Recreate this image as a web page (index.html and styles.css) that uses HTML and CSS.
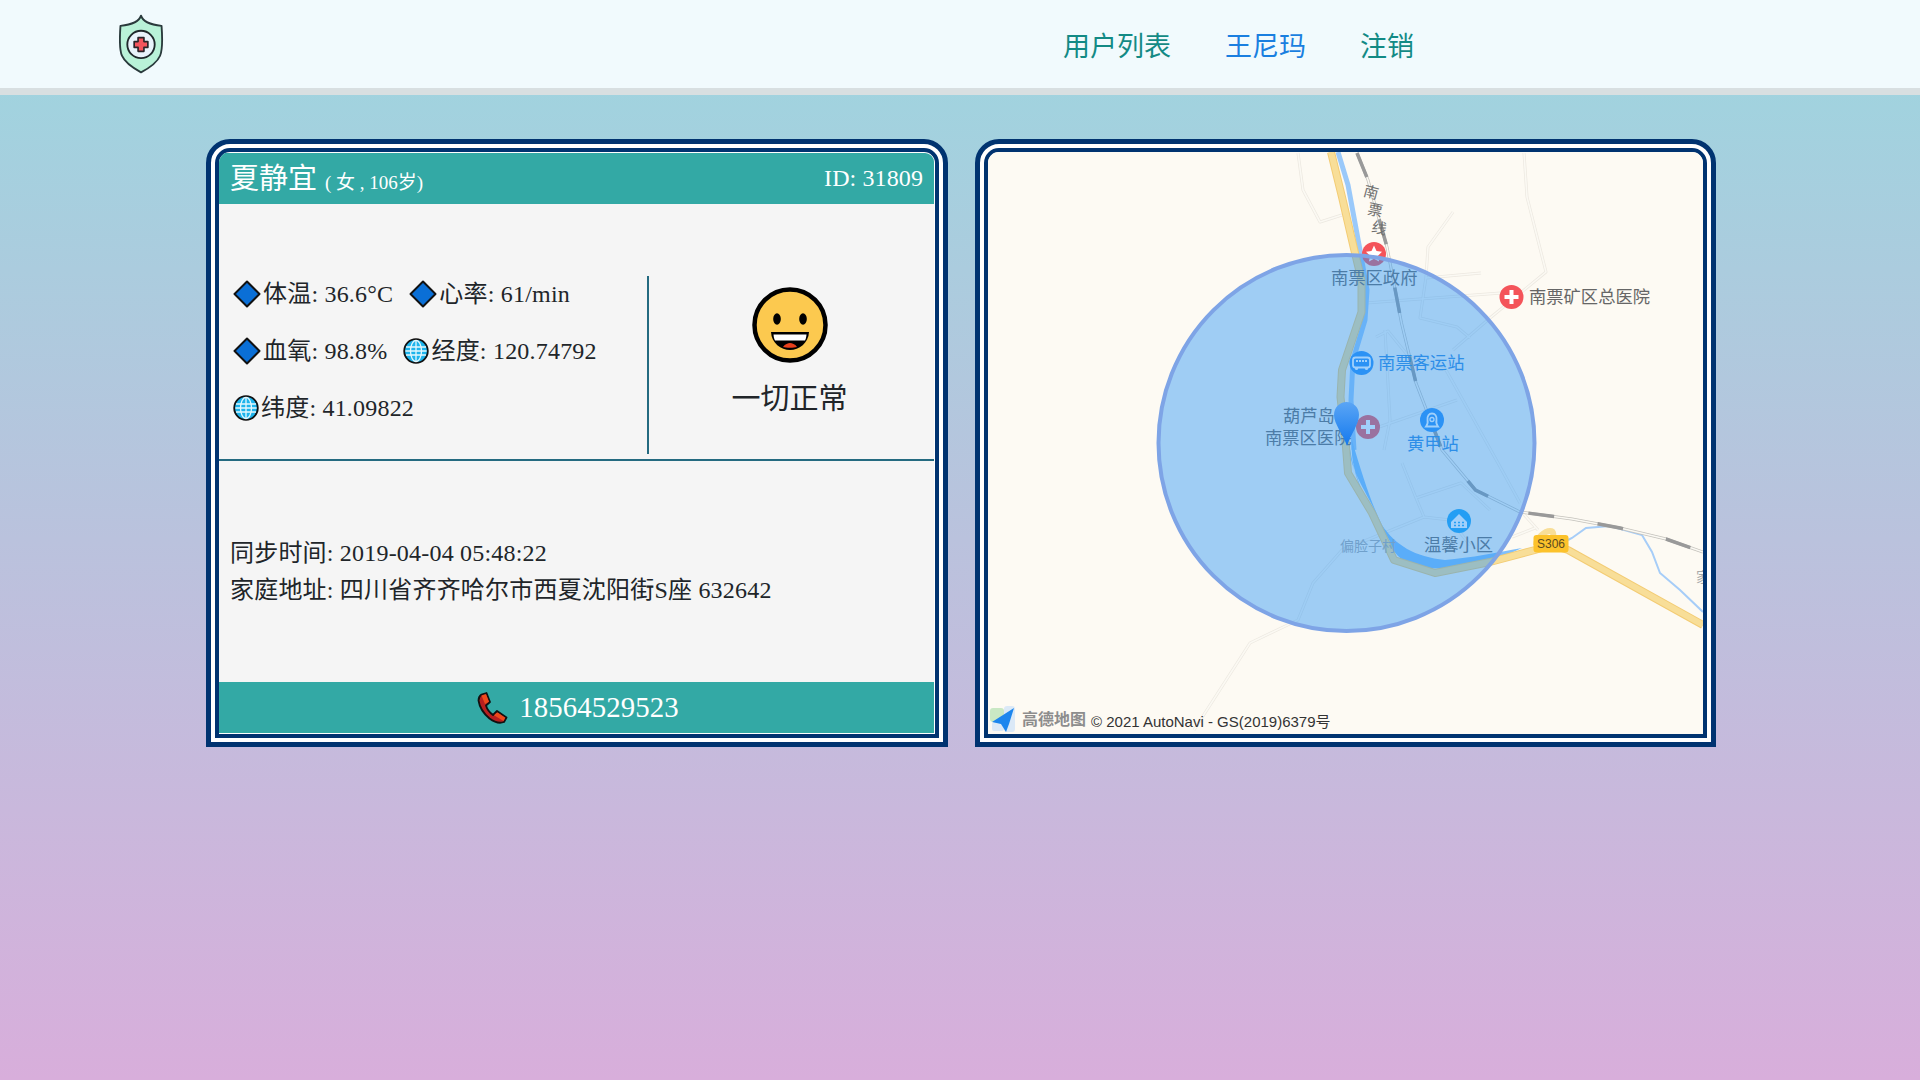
FILE: index.html
```html
<!DOCTYPE html>
<html lang="zh-CN">
<head>
<meta charset="utf-8">
<title>用户详情</title>
<link rel="stylesheet" href="styles.css">
</head>
<body>
<svg class="defs" width="0" height="0" aria-hidden="true">
  <defs>
    <symbol id="diamond" viewBox="0 0 28 28"><polygon points="14,1.500 26.500,14 14,26.500 1.500,14" fill="#0a6fd6" stroke="#111" stroke-width="2" stroke-linejoin="round"/></symbol>
    <symbol id="globe" viewBox="0 0 26 26">
      <circle cx="13" cy="13" r="11.800" fill="#1db4ec" stroke="#111" stroke-width="1.800"/>
      <g fill="none" stroke="#e4f7fd" stroke-width="1.300">
        <ellipse cx="13" cy="13" rx="5.500" ry="10.600"/>
        <path d="M13 2.400V23.600M3 9H23M2.400 13H23.600M3 17H23"/>
      </g>
    </symbol>
  </defs>
</svg>
<nav class="nav">
  <svg class="logo" viewBox="0 0 46 60" aria-label="logo">
    <path d="M22.500 1 C24 6 30 10 43.500 11.500 C44.500 25 44.500 36 42 42 C38.500 50 30 55 22.500 59 C15 55 6.500 50 3 42 C.5 36 .5 25 1.500 11.500 C15 10 21 6 22.500 1 Z" fill="#b9f2d8" stroke="#2a3a3c" stroke-width="1.900" stroke-linejoin="round"/>
    <circle cx="22.500" cy="30.500" r="14" fill="#e9f3fb" stroke="#20292c" stroke-width="1.900"/>
    <path d="M19.500 23.500H25.500V27.500H29.500V33.500H25.500V37.500H19.500V33.500H15.500V27.500H19.500Z" fill="#f3545d" stroke="#2a2328" stroke-width="1.700" stroke-linejoin="round"/>
  </svg>
  <div class="nav-links">
    <a class="nav-link">用户列表</a>
    <a class="nav-link nav-link-user">王尼玛</a>
    <a class="nav-link">注销</a>
  </div>
</nav>
<main class="main">
  <section class="card">
    <div class="card-inner card-inner-info">
      <header class="card-head">
        <div class="head-left"><span class="name">夏静宜</span><span class="sub">( 女 , 106岁)</span></div>
        <div class="uid">ID: 31809</div>
      </header>
      <div class="top">
        <div class="metrics">
          <div class="metric-row">
            <span class="metric"><svg class="ico"><use href="#diamond"/></svg><span class="metric-text">体温: 36.6°C</span></span>
            <span class="metric"><svg class="ico"><use href="#diamond"/></svg><span class="metric-text">心率: 61/min</span></span>
          </div>
          <div class="metric-row">
            <span class="metric"><svg class="ico"><use href="#diamond"/></svg><span class="metric-text">血氧: 98.8%</span></span>
            <span class="metric"><svg class="ico ico-globe"><use href="#globe"/></svg><span class="metric-text">经度: 120.74792</span></span>
          </div>
          <div class="metric-row">
            <span class="metric"><svg class="ico ico-globe"><use href="#globe"/></svg><span class="metric-text">纬度: 41.09822</span></span>
          </div>
        </div>
        <div class="divider"></div>
        <div class="status">
          <svg class="emoji" viewBox="0 0 76 76">
            <circle cx="38" cy="38" r="35.500" fill="#fcc94f" stroke="#000" stroke-width="4.500"/>
            <ellipse cx="25" cy="32" rx="3.800" ry="5.800" fill="#000"/>
            <ellipse cx="51" cy="32" rx="3.800" ry="5.800" fill="#000"/>
            <path d="M19 45H57C56.500 56 47 63 38 63S19.500 56 19 45Z" fill="#000"/>
            <path d="M21.500 47.500H54.500C54.300 50 53.800 52 53 53.500H23C22.200 52 21.700 50 21.500 47.500Z" fill="#fff"/>
            <path d="M31 60C33 57 36 56 38 56S43 57 45 60C42 61 34 61 31 60Z" fill="#e8401c"/>
          </svg>
          <div class="status-text">一切正常</div>
        </div>
      </div>
      <div class="rule"></div>
      <div class="info">
        <div>同步时间: 2019-04-04 05:48:22</div>
        <div>家庭地址: 四川省齐齐哈尔市西夏沈阳街S座 632642</div>
      </div>
      <footer class="card-foot">
        <svg class="phone" viewBox="0 0 32 32">
          <path d="M5.500 2.500 L10.500 1 L14 10 L10 13.500 Q11.500 19 17 23 L21 19 L30.500 25.500 L28 30 Q21.500 32.500 13.500 26.500 Q4 18.500 2.500 8.500 Q2.500 4.500 5.500 2.500Z" fill="#b81f1f" stroke="#111" stroke-width="1.800" stroke-linejoin="round"/>
          <path d="M5.500 3.500 L10 2.200 L13 9.800 L9 12 Z M21.200 20.200 L29.300 25.700 L27.500 29 L18 23.200 Z" fill="#ee4a1c"/>
        </svg>
        <span class="phone-num">18564529523</span>
      </footer>
    </div>
  </section>
  <section class="card card-map">
    <div class="card-inner">
      <svg class="map" viewBox="988 152 715 582" role="img" aria-label="地图">
        <defs>
          <linearGradient id="pin" x1="0" y1="0" x2="0" y2="1"><stop offset="0" stop-color="#5aa5f5"/><stop offset="1" stop-color="#1479ee"/></linearGradient>
        </defs>
        <rect x="988" y="152" width="715" height="582" fill="#fdfaf3"/>
        <g class="minor">
          <path d="M1298 153L1303 190L1320 222L1342 215M1524 153L1527 197L1546 272L1490 318L1453 350M1453 212L1428 247L1426 277L1420 318L1457 327L1470 338M1366 303L1501 293M1426 278L1481 273M1376 337L1388 331L1409 357L1446 370L1498 463L1520 503M1379 427L1457 400M1385 330L1390 420L1384 450M1402 463L1416 498L1424 517L1342 550L1313 583L1298 620L1250 643L1194 730M1416 498L1461 483L1490 510M1424 517L1450 520L1470 545M1520 510L1538 530M1512 537L1535 528"/>
        </g>
        <g class="minor-in">
          <path d="M1298 153L1303 190L1320 222L1342 215M1524 153L1527 197L1546 272L1490 318L1453 350M1453 212L1428 247L1426 277L1420 318L1457 327L1470 338M1366 303L1501 293M1426 278L1481 273M1376 337L1388 331L1409 357L1446 370L1498 463L1520 503M1379 427L1457 400M1385 330L1390 420L1384 450M1402 463L1416 498L1424 517L1342 550L1313 583L1298 620L1250 643L1194 730M1416 498L1461 483L1490 510M1424 517L1450 520L1470 545M1520 510L1538 530M1512 537L1535 528"/>
        </g>
        <path class="river-thin" d="M1568 540L1572 538L1586 528L1610 526L1642 535L1652 552L1660 573L1680 590L1703 612"/>
        <path class="river" d="M1338 152L1348 185L1360 250L1367 290L1365 320L1353 360L1351 400L1354 450"/>
        <path class="river-wide" d="M1349 440C1352 475 1368 510 1380 530C1395 552 1410 558 1440 565L1410 562C1394 556 1384 530 1372 505C1358 478 1349 465 1349 440ZM1352 440C1362 475 1372 505 1382 525C1395 545 1415 557 1445 560C1470 558 1500 552 1522 548L1500 558C1470 568 1440 572 1410 565C1392 555 1378 530 1368 505C1358 480 1350 465 1352 440Z"/>
        <path class="road-edge" d="M1331 152L1342 197L1355 253L1361.500 280L1361.500 312L1342 370L1340.500 397L1346 447L1348 473L1372 513L1394 560L1435 573L1490 562L1535 550L1552 545L1568 550L1703 625"/>
        <path class="road" d="M1331 152L1342 197L1355 253L1361.500 280L1361.500 312L1342 370L1340.500 397L1346 447L1348 473L1372 513L1394 560L1435 573L1490 562L1535 550L1552 545L1568 550L1703 625"/>
        <path class="road" d="M1536 545C1536 538 1545 531 1550 531C1556 531 1552 540 1552 545"/>
        <path class="rail" d="M1357 153L1368 180L1387 247L1401.500 323L1416 383L1442 450L1475.500 490L1520 512L1572 519L1620 528L1666 539L1703 552"/>
        <path class="rail-in" d="M1357 153L1368 180L1387 247L1401.500 323L1416 383L1442 450L1475.500 490L1520 512L1572 519L1620 528L1666 539L1703 552"/>
        <path class="rail-dash" d="M1357 153L1368 180L1387 247L1401.500 323L1416 383L1442 450L1475.500 490L1520 512L1572 519L1620 528L1666 539L1703 552"/>

        <text class="lb lb-road" transform="rotate(15 1371 193)" x="1371" y="191">南</text>
        <text class="lb lb-road" transform="rotate(12 1375 211)" x="1375" y="209">票</text>
        <text class="lb lb-road" transform="rotate(12 1379 229)" x="1379" y="227">线</text>

        <circle cx="1374" cy="254" r="12" fill="#f4545a"/>
        <polygon points="1374,245.500 1376.500,251 1382,251.800 1378,255.800 1379,261.500 1374,258.800 1369,261.500 1370,255.800 1366,251.800 1371.500,251" fill="#fff"/>
        <circle cx="1511.500" cy="297" r="12" fill="#f4545a"/>
        <path class="plus" d="M1504.500 297H1518.500M1511.500 290V304"/>
        <circle cx="1368" cy="427" r="12" fill="#f4545a"/>
        <path class="plus" d="M1361 427H1375M1368 420V434"/>
        <circle cx="1361.500" cy="363" r="12" fill="#2b8ef5"/>
        <rect x="1353" y="357.500" width="17" height="10" rx="2.500" fill="none" stroke="#fff" stroke-width="1.800"/>
        <path d="M1356 361H1367" stroke="#fff" stroke-width="2.200" stroke-dasharray="2 1"/>
        <circle cx="1356.500" cy="368.500" r="1.600" fill="#fff"/><circle cx="1366.500" cy="368.500" r="1.600" fill="#fff"/>
        <circle cx="1432" cy="420" r="12" fill="#2b8ef5"/>
        <path d="M1426 426.500C1428 424 1428 422 1427.500 420C1427 416 1429 413.500 1432 413.500S1437 416 1436.500 420C1436 422 1436 424 1438 426.500Z" fill="none" stroke="#fff" stroke-width="1.800"/>
        <circle cx="1432" cy="419.500" r="2" fill="none" stroke="#fff" stroke-width="1.300"/>
        <circle cx="1459" cy="521" r="12" fill="#1ea5f2"/>
        <path d="M1451 522L1459 514L1467 522V528H1451Z" fill="#fff"/>
        <path d="M1454 522.500H1456M1458 522.500H1460M1462 522.500H1464M1454 525.500H1456M1458 525.500H1460M1462 525.500H1464" stroke="#1ea5f2" stroke-width="1.500"/>

        <text class="lb lb-grey" x="1331" y="276.500">南票区政府</text>
        <text class="lb lb-grey" x="1529" y="295.500">南票矿区总医院</text>
        <text class="lb lb-blue" x="1378" y="361.500">南票客运站</text>
        <text class="lb lb-grey" x="1283" y="414.500">葫芦岛</text>
        <text class="lb lb-grey" x="1265" y="436.500">南票区医院</text>
        <text class="lb lb-blue" x="1407" y="442.500">黄甲站</text>
        <text class="lb lb-grey" x="1424" y="543.500">温馨小区</text>
        <text class="lb lb-small" x="1340" y="544.500">偏脸子村</text>
        <text class="lb lb-small" x="1696" y="575.500">家</text>

        <circle class="range" cx="1346.500" cy="443" r="188"/>

        <rect x="1533.500" y="535" width="35" height="17.500" rx="3" fill="#fcc22b"/>
        <text class="shield-text" x="1551" y="544">S306</text>

        <path d="M1346.500 402C1353.500 402 1359 407.500 1359 415C1359 424 1351 434 1347 446C1343 434 1334 424 1334 415C1334 407.500 1339.500 402 1346.500 402Z" fill="url(#pin)"/>

        <rect x="990" y="708" width="14" height="14" rx="3" fill="#c9e8c4"/>
        <rect x="1004" y="706" width="11" height="26" rx="3" fill="#dbe9f7"/>
        <rect x="992" y="722" width="12" height="9" rx="2" fill="#dbe9f7"/>
        <path d="M1014 708L992 722L1001 724L1006 732L1009 724Z" fill="#1c86ee"/>
        <text class="amap" x="1022" y="718">高德地图</text>
        <text class="copy" x="1091" y="721">© 2021 AutoNavi - GS(2019)6379号</text>
      </svg>
    </div>
  </section>
</main>
</body>
</html>
```
FILE: styles.css
```css
* { box-sizing: border-box; }

html, body { height: 100%; }

body {
  margin: 0;
  min-height: 1080px;
  background: linear-gradient(180deg, #9cd6df 0%, #d8aedb 100%);
  font-family: "Liberation Serif", "Noto Sans CJK SC", serif;
  color: #212529;
}

.defs { display: block; height: 0; }

.nav {
  display: flex;
  align-items: center;
  height: 95px;
  padding-left: 119px;
  background: #f1fafd;
  border-bottom: 7px solid #d8dfe1;
}

.logo { width: 45px; height: 60px; flex: none; }

.nav-links {
  display: flex;
  gap: 54px;
  margin-left: 899px;
  margin-top: 1px;
}

.nav-link {
  font-family: "Noto Sans CJK SC", sans-serif;
  font-size: 27px;
  color: #138a85;
}

.nav-link-user { color: #1a7fe0; }

.main {
  display: flex;
  gap: 27px;
  padding: 44px 0 0 206px;
}

.card {
  width: 742px;
  height: 608px;
  padding: 4px;
  border: 5px solid #003370;
  border-radius: 24px 24px 0 0;
  background: #fff;
}

.card-map { width: 741px; }

.card-inner {
  height: 100%;
  border: 4px solid #003370;
  border-radius: 15px 15px 0 0;
  overflow: hidden;
  background: #fdfaf3;
}

.card-inner-info {
  display: flex;
  flex-direction: column;
  padding: 1px 1px 1px 0;
  background: #f5f5f5;
  box-shadow: inset 0 1px 0 #fff, inset -1px 0 0 #fff, inset 0 -1px 0 #fff;
}

.card-head {
  display: flex;
  justify-content: space-between;
  align-items: center;
  height: 51px;
  flex: none;
  padding: 0 11px 0 11px;
  background: #33a9a5;
  color: #fff;
  border-top-right-radius: 9px;
}

.head-left { padding-bottom: 5px; }

.name { font-size: 29px; }

.sub {
  font-size: 19px;
  margin-left: 8px;
}

.uid {
  font-size: 24px;
  letter-spacing: 0.1px;
}

.top {
  display: flex;
  align-items: flex-start;
  height: 255px;
  flex: none;
  padding-top: 61px;
}

.metrics {
  width: 428px;
  flex: none;
  padding-left: 14px;
  font-size: 24px;
  letter-spacing: 0.2px;
}

.metric-row {
  display: flex;
  align-items: center;
  gap: 16px;
  height: 57px;
}

.metric {
  display: inline-flex;
  align-items: center;
  white-space: nowrap;
}

.metric-text { margin-bottom: 4px; }

.ico {
  width: 28px;
  height: 28px;
  margin-right: 2px;
  flex: none;
}

.ico-globe {
  width: 26px;
  height: 26px;
}

.divider {
  width: 2px;
  height: 178px;
  margin-top: 11px;
  background: #246a80;
  flex: none;
}

.status {
  flex: 1;
  display: flex;
  flex-direction: column;
  align-items: center;
  padding-top: 22px;
  padding-right: 4px;
}

.emoji { width: 76px; height: 76px; }

.status-text {
  font-family: "Noto Sans CJK SC", sans-serif;
  font-size: 29px;
  line-height: 40px;
  margin-top: 13px;
}

.rule {
  height: 2px;
  flex: none;
  background: #246a80;
}

.info {
  height: 221px;
  flex: none;
  padding: 74px 0 0 11px;
  font-size: 24px;
  line-height: 37px;
  letter-spacing: 0.2px;
}

.card-foot {
  display: flex;
  align-items: center;
  justify-content: center;
  gap: 11px;
  height: 51px;
  flex: none;
  padding-left: 2px;
  background: #33a9a5;
  color: #fff;
  font-size: 28.800px;
}

.phone-num { letter-spacing: 0.12px; }

.phone { width: 32px; height: 32px; flex: none; }

.map {
  display: block;
  width: 715px;
  height: 582px;
}

.minor path {
  fill: none;
  stroke: #ece8e0;
  stroke-width: 3;
  stroke-linejoin: round;
}

.minor-in path {
  fill: none;
  stroke: #fbf9f3;
  stroke-width: 1.600;
  stroke-linejoin: round;
}

.river {
  fill: none;
  stroke: #9ac9fa;
  stroke-width: 5;
  stroke-linejoin: round;
}

.river-thin {
  fill: none;
  stroke: #a6cdf8;
  stroke-width: 2;
}

.river-wide { fill: #80bffb; }

.road-edge {
  fill: none;
  stroke: #f3cc74;
  stroke-width: 8;
  stroke-linejoin: round;
}

.road {
  fill: none;
  stroke: #f8de98;
  stroke-width: 6;
  stroke-linejoin: round;
}

.rail {
  fill: none;
  stroke: #c4c2bc;
  stroke-width: 3;
}

.rail-in {
  fill: none;
  stroke: #fbf9f3;
  stroke-width: 1.500;
}

.rail-dash {
  fill: none;
  stroke: #999;
  stroke-width: 3.500;
  stroke-dasharray: 26 44;
}

.plus {
  fill: none;
  stroke: #fff;
  stroke-width: 4;
}

.range {
  fill: #2c96f7;
  fill-opacity: 0.45;
  stroke: #7ea4e6;
  stroke-width: 4;
}

.lb {
  font-family: "Noto Sans CJK SC", sans-serif;
  font-size: 17.300px;
  dominant-baseline: central;
}

.lb-grey { fill: #666; }

.lb-blue { fill: #2e87dc; }

.lb-road {
  fill: #707070;
  font-size: 15px;
  text-anchor: middle;
}

.lb-small {
  fill: #a8a8a8;
  font-size: 14px;
}

.shield-text {
  font-family: "Liberation Sans", sans-serif;
  font-size: 12px;
  fill: #5a4a20;
  text-anchor: middle;
  dominant-baseline: central;
}

.amap {
  font-family: "Noto Sans CJK SC", sans-serif;
  font-size: 16px;
  font-weight: 700;
  fill: #8d8d8d;
  dominant-baseline: central;
}

.copy {
  font-family: "Liberation Sans", "Noto Sans CJK SC", sans-serif;
  font-size: 15px;
  fill: #333;
  dominant-baseline: central;
}
```
